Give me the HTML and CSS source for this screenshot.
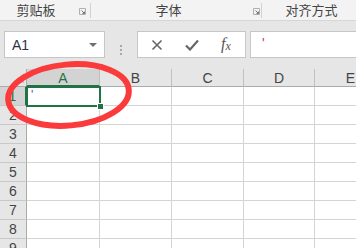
FILE: index.html
```html
<!DOCTYPE html>
<html lang="zh-CN">

<head>
  <meta charset="UTF-8" />
  <title>Excel</title>
  <link rel="stylesheet" href="styles.css">
</head>

<body>
  <div class="page">

    <div class="ribbon">
      <div class="group group-clip">
        <span class="group-label">剪贴板</span>
        <svg class="launcher" width="7" height="7" viewBox="0 0 7 7">
          <path d="M0.5 6.5V0.5H6.5V6.5Z" fill="none" stroke="#b0b0b0" />
          <path d="M2.5 2.5L5.5 5.5M3.5 5.5H5.5V3.5" fill="none" stroke="#777" />
        </svg>
        <span class="sep"></span>
      </div>
      <div class="group group-font">
        <span class="group-label">字体</span>
        <svg class="launcher" width="7" height="7" viewBox="0 0 7 7">
          <path d="M0.5 6.5V0.5H6.5V6.5Z" fill="none" stroke="#b0b0b0" />
          <path d="M2.5 2.5L5.5 5.5M3.5 5.5H5.5V3.5" fill="none" stroke="#777" />
        </svg>
        <span class="sep"></span>
      </div>
      <div class="group group-align">
        <span class="group-label">对齐方式</span>
      </div>
    </div>

    <div class="formula-bar">
      <div class="name-box">
        <span class="name">A1</span>
        <span class="caret"></span>
      </div>
      <div class="grip"><i></i><i></i><i></i></div>
      <div class="fx-buttons">
        <svg class="btn-cancel" width="12" height="12" viewBox="0 0 12 12">
          <path d="M1.5 1.5L10.5 10.5M10.5 1.5L1.5 10.5" stroke="#666" stroke-width="1.6" />
        </svg>
        <svg class="btn-enter" width="14" height="12" viewBox="0 0 14 12">
          <path d="M1 6.5L5 10.5L13 1.5" fill="none" stroke="#666" stroke-width="2.2" />
        </svg>
        <span class="btn-fx">f<sub>x</sub></span>
      </div>
      <div class="formula-input">'</div>
    </div>

    <div class="sheet">
      <div class="corner"><span class="select-all"></span></div>
      <div class="col-head active">A</div>
      <div class="col-head">B</div>
      <div class="col-head">C</div>
      <div class="col-head">D</div>
      <div class="col-head">E</div>

      <div class="row-head active">1</div>
      <div class="cell"><span class="value">'</span></div>
      <div class="cell"></div><div class="cell"></div><div class="cell"></div><div class="cell"></div>

      <div class="row-head">2</div>
      <div class="cell"></div><div class="cell"></div><div class="cell"></div><div class="cell"></div><div class="cell"></div>
      <div class="row-head">3</div>
      <div class="cell"></div><div class="cell"></div><div class="cell"></div><div class="cell"></div><div class="cell"></div>
      <div class="row-head">4</div>
      <div class="cell"></div><div class="cell"></div><div class="cell"></div><div class="cell"></div><div class="cell"></div>
      <div class="row-head">5</div>
      <div class="cell"></div><div class="cell"></div><div class="cell"></div><div class="cell"></div><div class="cell"></div>
      <div class="row-head">6</div>
      <div class="cell"></div><div class="cell"></div><div class="cell"></div><div class="cell"></div><div class="cell"></div>
      <div class="row-head">7</div>
      <div class="cell"></div><div class="cell"></div><div class="cell"></div><div class="cell"></div><div class="cell"></div>
      <div class="row-head">8</div>
      <div class="cell"></div><div class="cell"></div><div class="cell"></div><div class="cell"></div><div class="cell"></div>
      <div class="row-head">9</div>
      <div class="cell"></div><div class="cell"></div><div class="cell"></div><div class="cell"></div><div class="cell"></div>

      <div class="selection"><span class="fill-handle"></span></div>
    </div>

    <svg class="annotation" width="356" height="248" viewBox="0 0 356 248">
      <ellipse cx="68.5" cy="95" rx="60.5" ry="30.5" transform="rotate(-5 68.5 95)"
        fill="none" stroke="#fb3b3b" stroke-width="6" />
    </svg>

  </div>
</body>

</html>
```

FILE: styles.css
```css
body {
  margin: 0;
  width: 356px;
  height: 248px;
  overflow: hidden;
  font-family: "Liberation Sans", Arial, "Noto Sans CJK SC", sans-serif;
  color: #444;
}

.page {
  position: relative;
  width: 356px;
  height: 248px;
  overflow: hidden;
  background-color: #e6e6e6;
}

/* ribbon group labels */

.ribbon {
  display: flex;
  height: 20px;
  background-color: #f3f3f3;
  border-bottom: 1px solid #d6d6d6;
}

.group {
  display: flex;
  align-items: center;
  flex: none;
}

.group-label {
  text-align: center;
  font-family: "Noto Sans CJK SC", sans-serif;
  font-size: 13px;
  line-height: 20px;
  color: #444;
}

.group-clip .group-label {
  width: 72px;
}

.group-font .group-label {
  width: 155px;
}

.group-align .group-label {
  width: 99px;
}

.launcher {
  margin-left: 7px;
  margin-top: 2px;
}

.group-clip .sep {
  margin-left: 4px;
}

.group-font .sep {
  margin-left: 1px;
}

.sep {
  width: 1px;
  height: 15px;
  background-color: #d2d2d2;
}

/* name box + formula bar */

.formula-bar {
  display: flex;
  height: 48px;
  padding-top: 10px;
  box-sizing: border-box;
}

.name-box,
.fx-buttons,
.formula-input {
  height: 27px;
  box-sizing: border-box;
  background-color: white;
  border: 1px solid #c6c6c6;
}

.name-box {
  display: flex;
  align-items: center;
  width: 101px;
  margin-left: 4px;
  padding-left: 7px;
  padding-right: 7px;
}

.name {
  flex: 1;
  font-size: 14px;
  color: #2b3447;
}

.caret {
  width: 0;
  height: 0;
  border-left: 4px solid transparent;
  border-right: 4px solid transparent;
  border-top: 4px solid #707070;
}

.grip {
  display: flex;
  flex-direction: column;
  justify-content: center;
  gap: 2px;
  width: 2px;
  margin-left: 15px;
  margin-right: 15px;
}

.grip i {
  width: 2px;
  height: 2px;
  background-color: #a8a8a8;
}

.fx-buttons {
  display: flex;
  align-items: center;
  width: 109px;
}

.btn-cancel {
  margin-left: 13px;
}

.btn-enter {
  margin-left: 22px;
}

.btn-fx {
  margin-left: 22px;
  font-family: "Liberation Serif", serif;
  font-style: italic;
  font-size: 16px;
  color: #555;
  line-height: 16px;
}

.btn-fx sub {
  font-size: 12px;
  vertical-align: -1px;
}

.formula-input {
  flex: 1;
  margin-left: 4px;
  margin-right: -10px;
  padding-left: 11px;
  font-size: 14px;
  line-height: 22px;
  color: #b44;
}

/* worksheet grid */

.sheet {
  position: relative;
  display: grid;
  grid-template-columns: 27px 73px 72px 72px 71px 72px;
  grid-template-rows: 18px repeat(9, 19px);
  width: 387px;
  background-color: white;
}

.corner,
.col-head,
.row-head,
.cell {
  box-sizing: border-box;
}

.corner {
  position: relative;
  background-color: #e6e6e6;
  border-right: 1px solid #ababab;
  border-bottom: 1px solid #ababab;
}

.select-all {
  position: absolute;
  right: 2px;
  bottom: 3px;
  width: 0;
  height: 0;
  border-left: 10px solid transparent;
  border-bottom: 10px solid #c4c4c4;
}

.col-head {
  background-color: #e6e6e6;
  border-right: 1px solid #c0c0c0;
  border-bottom: 1px solid #ababab;
  text-align: center;
  font-size: 14px;
  line-height: 19px;
  color: #444;
}

.row-head {
  background-color: #e6e6e6;
  border-right: 1px solid #ababab;
  border-bottom: 1px solid #c8c8c8;
  text-align: center;
  font-size: 14px;
  line-height: 19px;
  color: #444;
}

.col-head.active,
.row-head.active {
  background-color: #d3d3d3;
  color: #217346;
}

.col-head.active {
  border-bottom: 2px solid #217346;
}

.row-head.active {
  border-right: 2px solid #217346;
}

.cell {
  border-right: 1px solid #d4d4d4;
  border-bottom: 1px solid #d4d4d4;
  padding-left: 4px;
  font-size: 12px;
  line-height: 17px;
}

.value {
  color: #3a5a8a;
}

.selection {
  position: absolute;
  left: 26px;
  top: 17px;
  width: 75px;
  height: 21px;
  box-sizing: border-box;
  border: 2px solid #217346;
}

.fill-handle {
  position: absolute;
  right: -5px;
  bottom: -5px;
  width: 5px;
  height: 5px;
  background-color: #217346;
  border: 1px solid white;
}

.annotation {
  position: absolute;
  left: 0;
  top: 0;
  pointer-events: none;
}
```
